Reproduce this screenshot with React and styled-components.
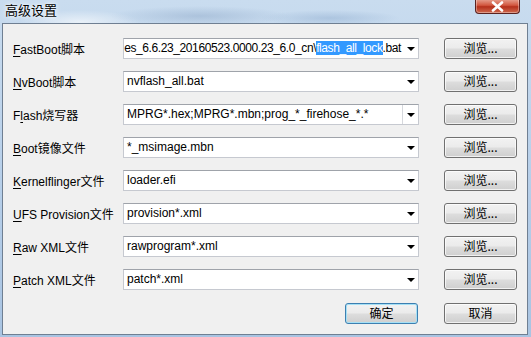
import styled, { createGlobalStyle } from 'styled-components';

const GlobalStyle = createGlobalStyle`
  html, body {
    margin: 0;
    padding: 0;
    background: #ffffff;
  }
  * {
    box-sizing: border-box;
  }
`;

const Window = styled.div`
  width: 531px;
  height: 337px;
  display: flex;
  flex-direction: column;
  padding: 0 3px 2px 2px;
  background:
    radial-gradient(ellipse 90px 10px at 200px 16px, rgba(150, 175, 205, 0.55), transparent),
    radial-gradient(ellipse 70px 8px at 330px 18px, rgba(140, 170, 205, 0.45), transparent),
    radial-gradient(ellipse 60px 12px at 80px 22px, rgba(255, 255, 255, 0.6), transparent),
    linear-gradient(180deg, #c9dcef 0%, #b8d0ea 50%, #a9c4e2 100%);
  font-family: "Liberation Sans", "Noto Sans CJK SC", sans-serif;
  font-size: 12px;
  color: #000;
`;

const TitleBar = styled.div`
  height: 23px;
  flex: none;
  display: flex;
  justify-content: space-between;
  align-items: flex-start;
  padding-left: 3px;
  padding-right: 8px;
`;

const Title = styled.div`
  font-family: "Noto Sans CJK SC", sans-serif;
  font-size: 13px;
  line-height: 17px;
  padding-top: 1px;
  text-shadow: 0 0 6px rgba(255, 255, 255, 0.9), 0 0 3px rgba(255, 255, 255, 0.9);
`;

const CloseButton = styled.div`
  width: 45px;
  height: 15px;
  margin-top: -1px;
  border: 1px solid #5a2220;
  border-top: none;
  border-radius: 0 0 4px 4px;
  background: linear-gradient(180deg, #e8a493 0%, #d2573f 45%, #b5301b 55%, #cf6a4f 100%);
  display: flex;
  align-items: center;
  justify-content: center;
  box-shadow: inset 0 0 0 1px rgba(255, 255, 255, 0.35);
`;

const Client = styled.div`
  flex: 1;
  border: 1px solid #6f7f92;
  background: #f0f0f0;
  padding: 14px 10px 0 10px;
  display: flex;
  flex-direction: column;
  gap: 12px;
`;

const Row = styled.div`
  display: grid;
  grid-template-columns: 110px 296px 1fr;
  align-items: center;
  height: 21px;
`;

const Label = styled.div`
  white-space: nowrap;
  u {
    text-decoration: underline;
    text-underline-offset: 2px;
  }
`;

const Combo = styled.div`
  height: 21px;
  background: #fff;
  border: 1px solid #c6c9d0;
  border-top-color: #9fa3aa;
  display: flex;
  align-items: center;
  overflow: hidden;
`;

const ComboText = styled.div`
  flex: 1;
  min-width: 0;
  display: flex;
  justify-content: ${p => (p.$scrolled ? 'flex-end' : 'flex-start')};
  padding: 0 ${p => (p.$scrolled ? '3px' : '0')} 0 3px;
  letter-spacing: ${p => (p.$scrolled ? '-0.4px' : 'normal')};
  white-space: nowrap;
  overflow: hidden;
  line-height: 17px;
  span {
    flex: none;
  }
`;

const Selected = styled.em`
  font-style: normal;
  background: #3399ff;
  color: #fff;
`;

const ArrowBox = styled.div`
  width: ${p => (p.$edit ? '16px' : '14px')};
  height: 100%;
  flex: none;
  display: flex;
  align-items: center;
  justify-content: center;
  border-left: ${p => (p.$edit ? '1px solid #d6d8dd' : 'none')};
`;

const Arrow = styled.div`
  width: 0;
  height: 0;
  border-left: 4px solid transparent;
  border-right: 4px solid transparent;
  border-top: 4px solid #000;
`;

const Button = styled.div`
  width: 73px;
  height: 21px;
  justify-self: end;
  border: 1px solid ${p => (p.$default ? '#3c7fb1' : '#707070')};
  border-radius: 3px;
  background: linear-gradient(180deg, #f2f2f2 0%, #ebebeb 48%, #dddddd 52%, #cfcfcf 100%);
  box-shadow: inset 0 0 0 1px ${p => (p.$default ? '#a6e0f5' : 'rgba(255,255,255,0.7)')};
  display: flex;
  align-items: center;
  justify-content: center;
  font-family: "Noto Sans CJK SC", sans-serif;
  font-size: 12px;
  line-height: 1;
  padding-bottom: 1px;
`;

const Footer = styled.div`
  display: flex;
  justify-content: flex-end;
  gap: 26px;
  margin-top: 1px;
`;

const rows = [
  {
    label: ['F', 'astBoot脚本'],
    scrolled: true,
    value: (
      <>
        es_6.6.23_20160523.0000.23_6.0_cn\<Selected>flash_all_lock</Selected>.bat
      </>
    ),
  },
  { label: ['N', 'vBoot脚本'], value: 'nvflash_all.bat' },
  { label: ['F', 'l', 'ash烧写器'], value: 'MPRG*.hex;MPRG*.mbn;prog_*_firehose_*.*', edit: true },
  { label: ['B', 'oot镜像文件'], value: '*_msimage.mbn' },
  { label: ['K', 'ernelflinger文件'], value: 'loader.efi' },
  { label: ['U', 'FS Provision文件'], value: 'provision*.xml' },
  { label: ['R', 'aw XML文件'], value: 'rawprogram*.xml' },
  { label: ['P', 'atch XML文件'], value: 'patch*.xml' },
];

const renderLabel = parts => {
  if (parts.length === 3) {
    return (
      <>
        {parts[0]}
        <u>{parts[1]}</u>
        {parts[2]}
      </>
    );
  }
  return (
    <>
      <u>{parts[0]}</u>
      {parts[1]}
    </>
  );
};

export default function App() {
  return (
    <>
      <GlobalStyle />
      <Window>
        <TitleBar>
          <Title>高级设置</Title>
          <CloseButton>
            <svg width="13" height="11" viewBox="0 0 13 11">
              <path
                d="M2 1.5 L11 9.5 M11 1.5 L2 9.5"
                stroke="#fff"
                strokeWidth="2.6"
                strokeLinecap="round"
                fill="none"
              />
            </svg>
          </CloseButton>
        </TitleBar>
        <Client>
          {rows.map((r, i) => (
            <Row key={i}>
              <Label>{renderLabel(r.label)}</Label>
              <Combo>
                <ComboText $scrolled={r.scrolled}>
                  <span>{r.value}</span>
                </ComboText>
                <ArrowBox $edit={r.edit}>
                  <Arrow />
                </ArrowBox>
              </Combo>
              <Button>浏览...</Button>
            </Row>
          ))}
          <Footer>
            <Button $default>确定</Button>
            <Button>取消</Button>
          </Footer>
        </Client>
      </Window>
    </>
  );
}
